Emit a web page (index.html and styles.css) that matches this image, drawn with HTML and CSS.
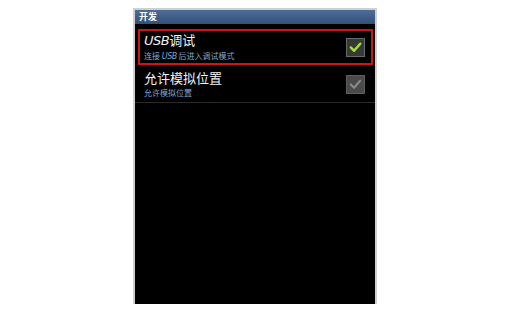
FILE: index.html
```html
<!DOCTYPE html>
<html>
<head>
<meta charset="utf-8">
<link rel="stylesheet" href="styles.css">
</head>
<body>
<div class="screen">
  <div class="header">开发</div>
  <div class="row selected">
    <div class="texts">
      <div class="title"><span class="usb">USB</span>调试</div>
      <div class="sub">连接 <span class="usb">USB</span> 后进入调试模式</div>
    </div>
    <div class="check on">
      <svg viewBox="0 0 18 18" width="18" height="18"><path d="M4 9.5 L7.5 13 L14 5.5" fill="none" stroke="#a8dc3c" stroke-width="2.6" stroke-linecap="round" stroke-linejoin="round"/></svg>
    </div>
  </div>
  <div class="row plain">
    <div class="texts">
      <div class="title">允许模拟位置</div>
      <div class="sub">允许模拟位置</div>
    </div>
    <div class="check off">
      <svg viewBox="0 0 18 18" width="18" height="18"><path d="M4 9.5 L7.5 13 L14 5.5" fill="none" stroke="#8a8a8a" stroke-width="2.2" stroke-linecap="round" stroke-linejoin="round"/></svg>
    </div>
  </div>
</div>
</body>
</html>
```
FILE: styles.css
```css
html, body {
  margin: 0;
  padding: 0;
  background: #ffffff;
}
body {
  font-family: "Noto Sans CJK SC", "Noto Sans", sans-serif;
  padding-top: 8px;
}
.screen {
  width: 240px;
  height: 294px;
  margin-left: 133px;
  background: #000;
  border: 2px solid #cfcfcf;
  border-bottom: none;
  display: flex;
  flex-direction: column;
}
.header {
  height: 14px;
  line-height: 14px;
  background: linear-gradient(#4c6d96, #33507a);
  color: #fff;
  font-size: 9px;
  font-weight: bold;
  padding-left: 4px;
}
.row {
  display: flex;
  align-items: center;
  justify-content: space-between;
}
.selected {
  margin: 5px 2px 0 3px;
  height: 32px;
  border: 2px solid #d0121a;
  padding: 0 6px 0 4px;
}
.plain {
  height: 36px;
  margin: 1px 0 0 0;
  padding: 0 10px 0 9px;
  border-bottom: 1px solid #2a2a2a;
}
.texts {
  display: flex;
  flex-direction: column;
  gap: 2px;
}
.title {
  color: #f2f2f2;
  font-size: 13px;
  line-height: 16px;
}
.sub {
  color: #7fa7d4;
  font-size: 8px;
  line-height: 10px;
}
.usb {
  font-style: italic;
  font-family: "DejaVu Sans", sans-serif;
  letter-spacing: -0.5px;
}
.check {
  width: 17px;
  height: 17px;
  display: flex;
  align-items: center;
  justify-content: center;
}
.check.on {
  background: #353a35;
  border: 1px solid #6a6a6a;
}
.check.off {
  background: #4a4a4a;
  border: 1px solid #5e5e5e;
}
```
